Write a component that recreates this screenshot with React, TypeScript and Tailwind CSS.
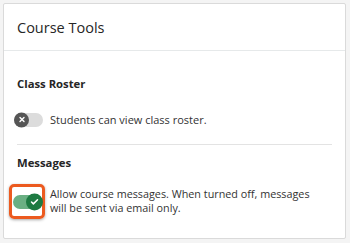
import { Check, X } from 'lucide-react';

const font = { fontFamily: '"Open Sans", "Liberation Sans", sans-serif' };

function Toggle({ on }: { on: boolean }) {
  if (on) {
    return (
      <div className="relative h-[14px] w-[29px] shrink-0 rounded-full bg-[#6aaf83]">
        <div className="absolute -right-[1px] top-1/2 flex h-[17px] w-[17px] -translate-y-1/2 items-center justify-center rounded-full bg-[#1d7a42]">
          <Check className="h-[9px] w-[9px] text-white" strokeWidth={4} />
        </div>
      </div>
    );
  }
  return (
    <div className="relative h-[14px] w-[29px] shrink-0 rounded-full bg-[#dcdcdc]">
      <div className="absolute left-0 top-1/2 flex h-[15px] w-[15px] -translate-y-1/2 items-center justify-center rounded-full bg-[#555555]">
        <X className="h-[8px] w-[8px] text-white" strokeWidth={4} />
      </div>
    </div>
  );
}

export default function App() {
  return (
    <div className="h-[243px] w-[350px] bg-[#f4f4f4] p-[3px] pr-[4px] pb-[4px]" style={font}>
      <div className="flex h-full flex-col rounded-[2px] border border-[#dadada] bg-white">
        <div className="flex h-[47px] items-center border-b border-[#e6e9ea] px-[13px]">
          <h1 className="mt-[1px] text-[14.5px] text-[#262626]">Course Tools</h1>
        </div>

        <div className="flex flex-col px-[13px]">
          <div className="mt-[25px] text-[11.3px] font-bold leading-[16px] text-[#262626]">Class Roster</div>
          <div className="mt-[20px] flex items-center gap-[7px]">
            <div className="-ml-[3px]">
              <Toggle on={false} />
            </div>
            <span className="text-[11px] leading-[15px] text-[#333333]">Students can view class roster.</span>
          </div>

          <div className="mt-[17px] border-t border-[#e3e3e3]" />

          <div className="mt-[10px] text-[11.3px] font-bold leading-[16px] text-[#262626]">Messages</div>
          <div className="mt-[13px] flex items-start gap-[5px]">
            <div className="-ml-[8px] flex h-[35px] w-[36px] shrink-0 items-center justify-center rounded-[5px] border-[3px] border-[#ec5a1f] shadow-[0_1px_3px_rgba(0,0,0,0.35)]">
              <Toggle on={true} />
            </div>
            <span className="mt-[3px] max-w-[272px] text-[10.8px] leading-[14px] text-[#333333]">
              Allow course messages. When turned off, messages will be sent via email only.
            </span>
          </div>
        </div>
      </div>
    </div>
  );
}
